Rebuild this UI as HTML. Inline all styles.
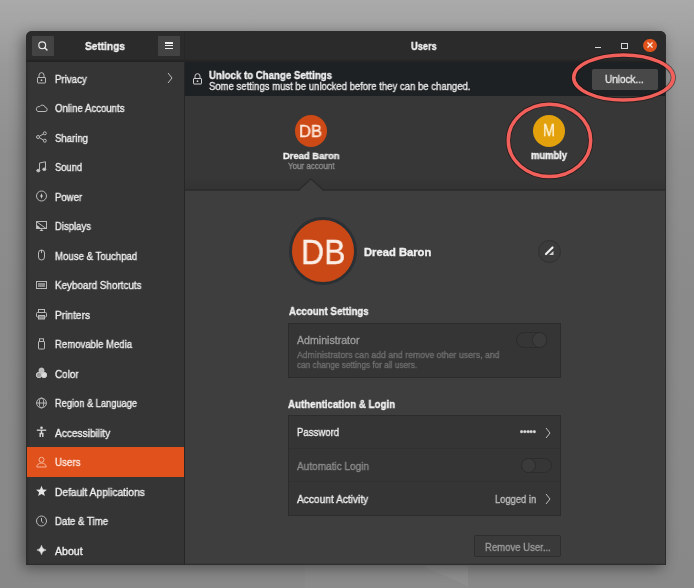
<!DOCTYPE html>
<html><head><meta charset="utf-8">
<style>
*{margin:0;padding:0;box-sizing:border-box}
html,body{width:694px;height:588px;overflow:hidden}
body{position:relative;font-family:"Liberation Sans",sans-serif;font-size:11px;color:#eee;
background:linear-gradient(180deg,#aaaaaa 0%,#a3a3a3 5%,#999999 11%,#8f8f8f 26%,#8a8a8a 50%,#888888 100%);}
.abs{position:absolute}
.t{position:absolute;white-space:nowrap;transform-origin:0 0;font-family:"Liberation Sans",sans-serif;-webkit-text-stroke:0.35px currentColor;-webkit-font-smoothing:antialiased;will-change:transform}
#win{position:absolute;left:26px;top:30.5px;width:640px;height:534.5px;border-radius:6px 6px 0 0;background:#333;box-shadow:-3px 3px 14px rgba(0,0,0,.42)}
</style></head><body>
<svg class="abs" style="left:0;top:0" width="694" height="588"><path d="M305 566 L468 566 L468 588 L305 588 Z" fill="#ffffff" opacity="0.025"/><path d="M423 566 L468 566 L468 586 Z" fill="#ffffff" opacity="0.05"/></svg>
<div id="win"></div>
<div class="abs" style="left:26px;top:30.5px;width:640px;height:30.5px;background:#2b2b2b;border-radius:6px 6px 0 0"></div>
<div class="abs" style="left:26px;top:61px;width:640px;height:1px;background:#232323"></div>
<div class="abs" style="left:26px;top:62px;width:158px;height:503px;background:#353535"></div>
<div class="abs" style="left:26px;top:62px;width:4px;height:503px;background:linear-gradient(90deg,#2b2b2b 0,#2f2f2f 35%,rgba(53,53,53,0) 100%)"></div>
<div class="abs" style="left:184px;top:31px;width:1px;height:534px;background:#262626"></div>
<div class="abs" style="left:185px;top:62px;width:481px;height:34px;background:#1e2123"></div>
<div class="abs" style="left:185px;top:96px;width:481px;height:94px;background:linear-gradient(180deg,#373737 0,#373737 85%,#333333 100%)"></div>
<div class="abs" style="left:185px;top:190px;width:481px;height:375px;background:#3e3e3e"></div>
<div class="abs" style="left:185px;top:189px;width:481px;height:2px;background:linear-gradient(180deg,#2a2a2a 0,#303030 100%)"></div>
<svg class="abs" style="left:299px;top:178px" width="24" height="13" viewBox="0 0 24 13"><path d="M0 13 L12 1 L24 13 Z" fill="#3e3e3e"/><path d="M0 11.8 L12 0.8 L24 11.8" fill="none" stroke="#2c2c2c" stroke-width="1.4"/></svg>
<div class="abs" style="left:32px;top:36px;width:22px;height:20px;background:#434343;border-radius:1px"></div>
<svg class="abs" style="left:37px;top:40px" width="12" height="12" viewBox="0 0 12 12"><circle cx="5.2" cy="5.2" r="3.4" fill="none" stroke="#e6e6e6" stroke-width="1.2"/><line x1="7.7" y1="7.7" x2="10" y2="10" stroke="#e6e6e6" stroke-width="1.5" stroke-linecap="round"/></svg>
<div class="abs" style="left:158px;top:36px;width:22px;height:20px;background:#434343;border-radius:1px"></div>
<div class="abs" style="left:165.2px;top:42.4px;width:7.5px;height:1.3px;background:#ececec"></div><div class="abs" style="left:165.2px;top:45.1px;width:7.5px;height:1.3px;background:#ececec"></div><div class="abs" style="left:165.2px;top:47.8px;width:7.5px;height:1.3px;background:#ececec"></div>
<div class="t" style="left:85.40px;top:40.50px;font-size:11px;line-height:11px;font-weight:bold;color:#f0f0f0;transform:scaleX(0.9218);">Settings</div>
<div class="t" style="left:411.45px;top:41.10px;font-size:11px;line-height:11px;font-weight:bold;color:#f0f0f0;transform:scaleX(0.8405);">Users</div>
<div class="abs" style="left:595px;top:47.2px;width:5.8px;height:1.3px;background:#d8d8d8"></div>
<div class="abs" style="left:621px;top:43px;width:6.5px;height:6px;border:1.1px solid #d8d8d8"></div>
<div class="abs" style="left:643px;top:38.5px;width:13.5px;height:13.5px;border-radius:50%;background:#e2531c"></div>
<svg class="abs" style="left:645.75px;top:41.25px" width="8" height="8" viewBox="0 0 8 8"><path d="M1.5 1.5L6.5 6.5M6.5 1.5L1.5 6.5" stroke="#fbeee8" stroke-width="1.3"/></svg>
<div class="t" style="left:54.50px;top:73.51px;font-size:10.5px;line-height:10.5px;font-weight:normal;color:#eeeeee;transform:scaleX(0.9209);">Privacy</div>
<div class="t" style="left:54.50px;top:103.01px;font-size:10.5px;line-height:10.5px;font-weight:normal;color:#eeeeee;transform:scaleX(0.9155);">Online Accounts</div>
<div class="t" style="left:54.50px;top:132.51px;font-size:10.5px;line-height:10.5px;font-weight:normal;color:#eeeeee;transform:scaleX(0.9118);">Sharing</div>
<div class="t" style="left:54.50px;top:162.01px;font-size:10.5px;line-height:10.5px;font-weight:normal;color:#eeeeee;transform:scaleX(0.8926);">Sound</div>
<div class="t" style="left:54.50px;top:191.51px;font-size:10.5px;line-height:10.5px;font-weight:normal;color:#eeeeee;transform:scaleX(0.9106);">Power</div>
<div class="t" style="left:54.50px;top:221.01px;font-size:10.5px;line-height:10.5px;font-weight:normal;color:#eeeeee;transform:scaleX(0.9048);">Displays</div>
<div class="t" style="left:54.50px;top:250.51px;font-size:10.5px;line-height:10.5px;font-weight:normal;color:#eeeeee;transform:scaleX(0.9167);">Mouse &amp; Touchpad</div>
<div class="t" style="left:54.50px;top:280.01px;font-size:10.5px;line-height:10.5px;font-weight:normal;color:#eeeeee;transform:scaleX(0.9380);">Keyboard Shortcuts</div>
<div class="t" style="left:54.50px;top:309.51px;font-size:10.5px;line-height:10.5px;font-weight:normal;color:#eeeeee;transform:scaleX(0.9675);">Printers</div>
<div class="t" style="left:54.50px;top:339.01px;font-size:10.5px;line-height:10.5px;font-weight:normal;color:#eeeeee;transform:scaleX(0.9111);">Removable Media</div>
<div class="t" style="left:54.50px;top:368.51px;font-size:10.5px;line-height:10.5px;font-weight:normal;color:#eeeeee;transform:scaleX(0.9406);">Color</div>
<div class="t" style="left:54.50px;top:398.01px;font-size:10.5px;line-height:10.5px;font-weight:normal;color:#eeeeee;transform:scaleX(0.8833);">Region &amp; Language</div>
<div class="t" style="left:54.50px;top:427.51px;font-size:10.5px;line-height:10.5px;font-weight:normal;color:#eeeeee;transform:scaleX(0.9654);">Accessibility</div>
<div class="abs" style="left:27px;top:447.0px;width:157px;height:29.5px;background:#e1511c"></div>
<div class="t" style="left:54.50px;top:457.01px;font-size:10.5px;line-height:10.5px;font-weight:normal;color:#fbe6dc;transform:scaleX(0.9300);">Users</div>
<div class="t" style="left:54.50px;top:486.51px;font-size:10.5px;line-height:10.5px;font-weight:normal;color:#eeeeee;transform:scaleX(0.9730);">Default Applications</div>
<div class="t" style="left:54.50px;top:516.01px;font-size:10.5px;line-height:10.5px;font-weight:normal;color:#eeeeee;transform:scaleX(0.9179);">Date &amp; Time</div>
<div class="t" style="left:54.50px;top:545.51px;font-size:10.5px;line-height:10.5px;font-weight:normal;color:#eeeeee;transform:scaleX(1.0059);">About</div>
<svg class="abs" style="left:35px;top:72.25px" width="13" height="12" viewBox="0 0 13 12" fill="none" stroke="#b9b9b9" stroke-width="1"><path d="M4 5V3.2a2.5 2.5 0 0 1 5 0V5"/><rect x="2.5" y="5.5" width="8" height="5.5" rx="0.5"/><circle cx="6.5" cy="8.2" r="0.9" fill="#c9c9c9" stroke="none"/></svg>
<svg class="abs" style="left:35px;top:101.75px" width="13" height="12" viewBox="0 0 13 12" fill="none" stroke="#b9b9b9" stroke-width="1"><path d="M3 9.5h7a2 2 0 0 0 0.3-4 3 3 0 0 0-5.6-0.8A2.4 2.4 0 0 0 3 9.5z"/></svg>
<svg class="abs" style="left:35px;top:131.25px" width="13" height="12" viewBox="0 0 13 12" fill="none" stroke="#b9b9b9" stroke-width="1"><circle cx="3" cy="6" r="1.5"/><circle cx="9.8" cy="2.3" r="1.5"/><circle cx="9.8" cy="9.7" r="1.5"/><path d="M4.3 5.3L8.5 3M4.3 6.7L8.5 9"/></svg>
<svg class="abs" style="left:35px;top:160.75px" width="13" height="12" viewBox="0 0 13 12" fill="none" stroke="#b9b9b9" stroke-width="1"><path d="M4.5 9.5V2l6-1.2v7.3" /><ellipse cx="3.3" cy="9.6" rx="1.6" ry="1.3" fill="#c9c9c9"/><ellipse cx="9.3" cy="8.3" rx="1.6" ry="1.3" fill="#c9c9c9"/></svg>
<svg class="abs" style="left:35px;top:190.25px" width="13" height="12" viewBox="0 0 13 12" fill="none" stroke="#b9b9b9" stroke-width="1"><circle cx="6.5" cy="6" r="5"/><path d="M6.5 3.2L5.3 6.2h2.4z" fill="#c9c9c9" stroke="none"/><path d="M6.5 8.8L7.7 5.8h-2.4z" fill="#c9c9c9" stroke="none"/></svg>
<svg class="abs" style="left:35px;top:219.75px" width="13" height="12" viewBox="0 0 13 12" fill="none" stroke="#b9b9b9" stroke-width="1"><rect x="1.5" y="1.5" width="10" height="7" /><path d="M2 2L11 8.5" /><path d="M2 5l4 3.5H2z" fill="#c9c9c9" stroke="none"/><path d="M4.5 11h4l-2-2z" fill="#c9c9c9" stroke="none"/></svg>
<svg class="abs" style="left:35px;top:249.25px" width="13" height="12" viewBox="0 0 13 12" fill="none" stroke="#b9b9b9" stroke-width="1"><rect x="3.5" y="1" width="6" height="10" rx="3"/><path d="M6.5 1v3"/></svg>
<svg class="abs" style="left:35px;top:278.75px" width="13" height="12" viewBox="0 0 13 12" fill="none" stroke="#b9b9b9" stroke-width="1"><rect x="1.5" y="2.5" width="10" height="7"/><rect x="3" y="4" width="7" height="4" fill="#8a8a8a" stroke="none"/></svg>
<svg class="abs" style="left:35px;top:308.25px" width="13" height="12" viewBox="0 0 13 12" fill="none" stroke="#b9b9b9" stroke-width="1"><rect x="3.5" y="1.5" width="6" height="3"/><rect x="1.5" y="4.5" width="10" height="4.5" rx="1"/><rect x="3.5" y="7.5" width="6" height="3.5" fill="#8a8a8a"/></svg>
<svg class="abs" style="left:35px;top:337.75px" width="13" height="12" viewBox="0 0 13 12" fill="none" stroke="#b9b9b9" stroke-width="1"><rect x="3.5" y="3.5" width="6" height="7.5" rx="0.5"/><rect x="4.5" y="0.8" width="4" height="2.7"/></svg>
<svg class="abs" style="left:35px;top:367.25px" width="13" height="12" viewBox="0 0 13 12" fill="none" stroke="#c9c9c9" stroke-width="1"><circle cx="6.5" cy="3.5" r="2.5" fill="#bdbdbd"/><circle cx="4" cy="8" r="2.7" fill="#9a9a9a"/><circle cx="9" cy="8" r="2.7" fill="#dadada"/></svg>
<svg class="abs" style="left:35px;top:396.75px" width="13" height="12" viewBox="0 0 13 12" fill="none" stroke="#b9b9b9" stroke-width="1"><circle cx="6.5" cy="6" r="4.9"/><ellipse cx="6.5" cy="6" rx="2.2" ry="4.9"/><path d="M1.6 6h9.8"/></svg>
<svg class="abs" style="left:35px;top:426.25px" width="13" height="12" viewBox="0 0 13 12" fill="none" stroke="#b9b9b9" stroke-width="1"><circle cx="6.5" cy="1.8" r="1.3" fill="#d8d8d8" stroke="none"/><path d="M1.8 4.2h9.4" stroke="#d8d8d8" stroke-width="1.3"/><path d="M6.5 4v3.5M5.2 11V7.5h2.6V11" stroke="#d8d8d8" stroke-width="1.4"/></svg>
<svg class="abs" style="left:35px;top:455.75px" width="13" height="12" viewBox="0 0 13 12" fill="none" stroke="#f6b497" stroke-width="1"><circle cx="6.5" cy="3.8" r="2.5"/><path d="M1.8 11a4.7 4 0 0 1 9.4 0z"/></svg>
<svg class="abs" style="left:35px;top:485.25px" width="13" height="12" viewBox="0 0 13 12" fill="none" stroke="#b9b9b9" stroke-width="1"><path d="M6.5 0.8l1.5 3.6 3.9 0.3-3 2.5 0.95 3.8L6.5 8.9 3.15 11l0.95-3.8-3-2.5 3.9-0.3z" fill="#e6e6e6" stroke="none"/></svg>
<svg class="abs" style="left:35px;top:514.75px" width="13" height="12" viewBox="0 0 13 12" fill="none" stroke="#b9b9b9" stroke-width="1"><circle cx="6.5" cy="6" r="5"/><path d="M6.5 3v3.2l2 2"/></svg>
<svg class="abs" style="left:35px;top:544.25px" width="13" height="12" viewBox="0 0 13 12" fill="none" stroke="#b9b9b9" stroke-width="1"><path d="M6.5 1.3Q7.1 5.4 11.1 6 7.1 6.6 6.5 10.7 5.9 6.6 1.9 6 5.9 5.4 6.5 1.3z" fill="#e6e6e6" stroke="#e6e6e6" stroke-width="0.5"/></svg>
<svg class="abs" style="left:167px;top:72px" width="6" height="12" viewBox="0 0 6 12"><path d="M1 1l4 5-4 5" fill="none" stroke="#bdbdbd" stroke-width="1"/></svg>
<svg class="abs" style="left:192px;top:73px" width="11" height="12" viewBox="0 0 11 12" fill="none" stroke="#cfcfcf" stroke-width="1"><path d="M3 5V3.2a2.5 2.5 0 0 1 5 0V5"/><rect x="1.5" y="5.5" width="8" height="5.5" rx="0.5"/><circle cx="5.5" cy="8.2" r="0.9" fill="#cfcfcf" stroke="none"/></svg>
<div class="t" style="left:208.80px;top:69.61px;font-size:10.5px;line-height:10.5px;font-weight:bold;color:#f0f0f0;transform:scaleX(0.9207);">Unlock to Change Settings</div>
<div class="t" style="left:209.00px;top:80.91px;font-size:10.5px;line-height:10.5px;font-weight:normal;color:#e8e8e8;transform:scaleX(0.9087);">Some settings must be unlocked before they can be changed.</div>
<div class="abs" style="left:592px;top:68.5px;width:66px;height:21px;background:#484848;border-radius:2px"></div>
<div class="t" style="left:605.40px;top:74.20px;font-size:11px;line-height:11px;font-weight:normal;color:#e6e6e6;transform:scaleX(0.9067);">Unlock...</div>
<div class="abs" style="left:295px;top:115px;width:32px;height:32px;border-radius:50%;background:#cd4a16"></div>
<div class="t" style="left:299.30px;top:123.24px;font-size:17px;line-height:17px;font-weight:normal;color:#fde6d8;transform:scaleX(0.9739);">DB</div>
<div class="t" style="left:282.60px;top:151.14px;font-size:9.5px;line-height:9.5px;font-weight:bold;color:#f0f0f0;transform:scaleX(0.9892);">Dread Baron</div>
<div class="t" style="left:287.95px;top:161.34px;font-size:9.5px;line-height:9.5px;font-weight:normal;color:#8e8e8e;transform:scaleX(0.8438);">Your account</div>
<div class="abs" style="left:533px;top:115px;width:32px;height:32px;border-radius:50%;background:#e3a20c"></div>
<div class="t" style="left:543.00px;top:122.44px;font-size:17px;line-height:17px;font-weight:normal;color:#fff3d6;transform:scaleX(0.8474);">M</div>
<div class="t" style="left:531.10px;top:151.33px;font-size:10px;line-height:10px;font-weight:bold;color:#f0f0f0;transform:scaleX(0.9390);">mumbly</div>
<div class="abs" style="left:288.8px;top:216.5px;width:68.5px;height:68.5px;border-radius:50%;background:#ca4815;border:3px solid #2b3034"></div>
<div class="t" style="left:300.65px;top:233.65px;font-size:35px;line-height:35px;font-weight:normal;color:#fbeee6;transform:scaleX(0.9152);">DB</div>
<div class="t" style="left:364.20px;top:246.80px;font-size:11px;line-height:11px;font-weight:bold;color:#f0f0f0;transform:scaleX(1.0194);">Dread Baron</div>
<div class="abs" style="left:538px;top:240px;width:23px;height:23px;border-radius:50%;background:#3b3b3b;border:1.5px solid #303030"></div>
<svg class="abs" style="left:543px;top:245px" width="13" height="12" viewBox="0 0 13 12"><path d="M3 9L9.5 2.5" stroke="#f0f0f0" stroke-width="2.2" stroke-linecap="round"/><path d="M6 10h4.5V6z" fill="#cfcfcf"/></svg>
<div class="t" style="left:288.50px;top:306.40px;font-size:11px;line-height:11px;font-weight:bold;color:#f0f0f0;transform:scaleX(0.8812);">Account Settings</div>
<div class="abs" style="left:288px;top:322.5px;width:273px;height:55px;background:#353535;border:1px solid #2c2c2c"></div>
<div class="t" style="left:297.10px;top:334.91px;font-size:10.5px;line-height:10.5px;font-weight:normal;color:#9a9a9a;transform:scaleX(1.0105);">Administrator</div>
<div class="t" style="left:297.10px;top:350.04px;font-size:9.5px;line-height:9.5px;font-weight:normal;color:#6f6f6f;transform:scaleX(0.9148);">Administrators can add and remove other users, and</div>
<div class="t" style="left:297.10px;top:360.04px;font-size:9.5px;line-height:9.5px;font-weight:normal;color:#6f6f6f;transform:scaleX(0.8650);">can change settings for all users.</div>
<div class="abs" style="left:516.3px;top:332.2px;width:31px;height:15.5px;border-radius:8px;background:#363636;border:1px solid #2c2c2c"></div>
<div class="abs" style="left:531.8px;top:332.2px;width:15.5px;height:15.5px;border-radius:50%;background:#3b3b3b;border:1px solid #2c2c2c"></div>
<div class="t" style="left:288.40px;top:399.20px;font-size:11px;line-height:11px;font-weight:bold;color:#f0f0f0;transform:scaleX(0.8852);">Authentication &amp; Login</div>
<div class="abs" style="left:288px;top:415px;width:273px;height:101px;background:#353535;border:1px solid #2c2c2c"></div>
<div class="abs" style="left:289px;top:448px;width:271px;height:1px;background:#313131"></div>
<div class="abs" style="left:289px;top:481px;width:271px;height:1px;background:#313131"></div>
<div class="t" style="left:296.60px;top:427.30px;font-size:11px;line-height:11px;font-weight:normal;color:#eeeeee;transform:scaleX(0.8700);">Password</div>
<div class="t" style="left:296.60px;top:460.90px;font-size:11px;line-height:11px;font-weight:normal;color:#8c8c8c;transform:scaleX(0.9128);">Automatic Login</div>
<div class="t" style="left:296.60px;top:494.10px;font-size:11px;line-height:11px;font-weight:normal;color:#eeeeee;transform:scaleX(0.9248);">Account Activity</div>
<div class="t" style="left:520.00px;top:427.55px;font-size:9px;line-height:9px;font-weight:bold;color:#d8d8d8;transform:scaleX(1.0156);">•••••</div>
<div class="t" style="left:494.70px;top:493.90px;font-size:11px;line-height:11px;font-weight:normal;color:#bdbdbd;transform:scaleX(0.8526);">Logged in</div>
<svg class="abs" style="left:544.5px;top:426.5px" width="6" height="12" viewBox="0 0 6 12"><path d="M1 1l4 5-4 5" fill="none" stroke="#bdbdbd" stroke-width="1"/></svg>
<svg class="abs" style="left:544.5px;top:492.5px" width="6" height="12" viewBox="0 0 6 12"><path d="M1 1l4 5-4 5" fill="none" stroke="#bdbdbd" stroke-width="1"/></svg>
<div class="abs" style="left:520.5px;top:457.5px;width:31px;height:15.5px;border-radius:8px;background:#363636;border:1px solid #2c2c2c"></div>
<div class="abs" style="left:520.5px;top:457.5px;width:15.5px;height:15.5px;border-radius:50%;background:#3b3b3b;border:1px solid #2c2c2c"></div>
<div class="abs" style="left:474px;top:535px;width:87px;height:22px;background:#3a3a3a;border:1px solid #2e2e2e;border-radius:2px"></div>
<div class="t" style="left:485.00px;top:541.90px;font-size:11px;line-height:11px;font-weight:normal;color:#9c9c9c;transform:scaleX(0.8680);">Remove User...</div>
<div class="abs" style="left:26px;top:562.5px;width:640px;height:2.5px;background:linear-gradient(180deg,rgba(40,40,40,0) 0,#2a2a2a 100%)"></div>
<div class="abs" style="left:664.5px;top:36px;width:1.5px;height:529px;background:#2c2c2c"></div>
<div class="abs" style="left:26px;top:59px;width:640px;height:2px;background:linear-gradient(180deg,rgba(35,35,35,0) 0,#242424 100%)"></div>
<svg class="abs" style="left:0;top:0" width="694" height="588" viewBox="0 0 694 588"><g fill="none"><ellipse cx="623.5" cy="77.5" rx="49.8" ry="22.6" stroke="#1a0c0c" stroke-opacity="0.55" stroke-width="5.2"/><ellipse cx="549.5" cy="140.4" rx="41.2" ry="36.2" stroke="#1a0c0c" stroke-opacity="0.55" stroke-width="5.2"/><ellipse cx="623.5" cy="77.5" rx="49.8" ry="22.6" stroke="#f2605b" stroke-width="3.5"/><ellipse cx="549.5" cy="140.4" rx="41.2" ry="36.2" stroke="#f2605b" stroke-width="3.5"/></g></svg>
</body></html>
